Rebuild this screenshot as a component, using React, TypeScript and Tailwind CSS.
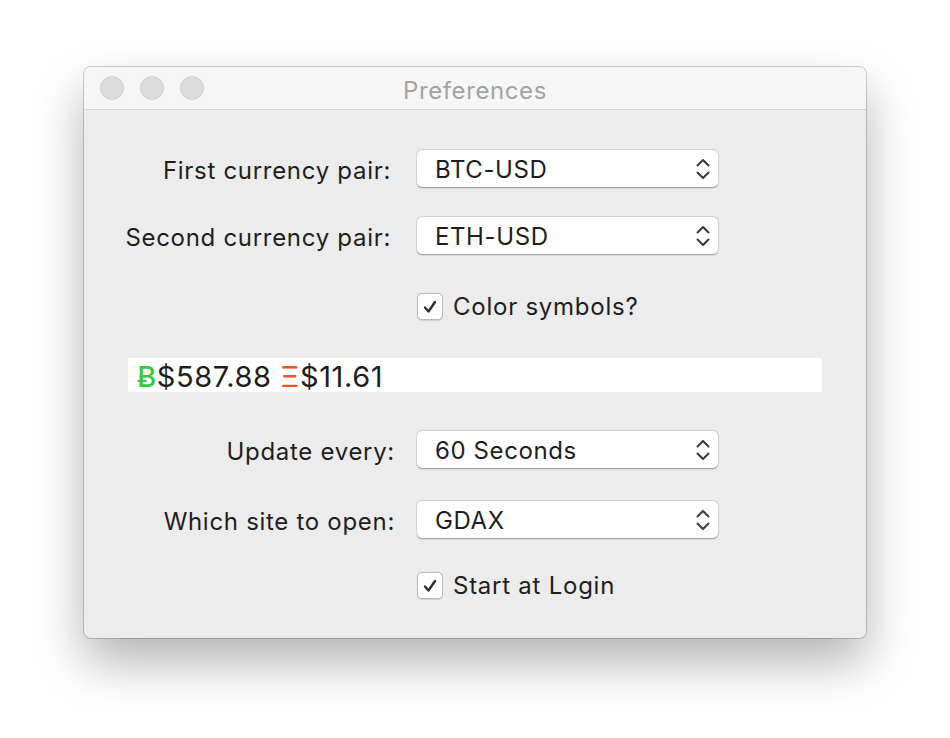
import React from "react";

const font = { fontFamily: "Inter, 'Liberation Sans', sans-serif" };

function Chevrons() {
  return (
    <svg width="16" height="26" viewBox="0 0 16 26" className="shrink-0">
      <path d="M2.5 9.5 L8 4 L13.5 9.5" fill="none" stroke="#3a3a3a" strokeWidth="2" strokeLinecap="round" strokeLinejoin="round" />
      <path d="M2.5 16.5 L8 22 L13.5 16.5" fill="none" stroke="#3a3a3a" strokeWidth="2" strokeLinecap="round" strokeLinejoin="round" />
    </svg>
  );
}

function Popup({ value }: { value: string }) {
  return (
    <div className="flex h-[37px] w-[301px] items-center justify-between rounded-[5px] bg-white pl-[18px] pr-[7px] shadow-[0_0.5px_1.5px_rgba(0,0,0,0.35),0_0_0_0.5px_rgba(0,0,0,0.08)]">
      <span className="pt-[2px] text-[24px] leading-none tracking-[0.6px] text-[#1e1e1e]">{value}</span>
      <Chevrons />
    </div>
  );
}

function Check({ label }: { label: string }) {
  return (
    <div className="flex items-center gap-[10px]">
      <div className="flex h-[27px] w-[26px] items-center justify-center rounded-[5px] border border-[#b9b9b9] bg-white shadow-[0_0.5px_1px_rgba(0,0,0,0.12)]">
        <svg width="16" height="16" viewBox="0 0 16 16">
          <path d="M3 8.5 L6.5 12.5 L13 3" fill="none" stroke="#2e2e2e" strokeWidth="2.4" strokeLinecap="round" strokeLinejoin="round" />
        </svg>
      </div>
      <span className="pt-[1px] text-[24px] leading-none tracking-[0.75px] text-[#1e1e1e]">{label}</span>
    </div>
  );
}

function Row({ label, value, pr }: { label: string; value: string; pr: string }) {
  return (
    <div className="flex items-center">
      <div className={`w-[333px] pt-[5px] text-right text-[24px] leading-none tracking-[0.7px] text-[#1e1e1e] ${pr}`}>{label}</div>
      <Popup value={value} />
    </div>
  );
}

export default function App() {
  return (
    <div className="min-h-[738px] w-[950px] bg-white pl-[84px] pt-[67px]" style={font}>
      <div className="flex h-[571px] w-[782px] flex-col overflow-hidden rounded-[7px] bg-[#ececec] shadow-[0_24px_50px_rgba(0,0,0,0.3),0_0_0_1px_rgba(0,0,0,0.18)]">
        <div className="relative flex h-[43px] shrink-0 items-center border-b border-[#d2d2d2] bg-[#f6f6f6]">
          <div className="flex gap-[16px] pl-[16px]">
            <div className="h-[24px] w-[24px] rounded-full border border-[#d0d0d0] bg-[#dddddd]" />
            <div className="h-[24px] w-[24px] rounded-full border border-[#d0d0d0] bg-[#dddddd]" />
            <div className="h-[24px] w-[24px] rounded-full border border-[#d0d0d0] bg-[#dddddd]" />
          </div>
          <div className="absolute inset-0 flex items-center justify-center pt-[5px] text-[24px] leading-none tracking-[0.6px] text-[#a3a3a3]">Preferences</div>
        </div>
        <div className="flex flex-col">
          <div className="mt-[40px]">
            <Row label="First currency pair:" value="BTC-USD" pr="pr-[26px]" />
          </div>
          <div className="mt-[30px]">
            <Row label="Second currency pair:" value="ETH-USD" pr="pr-[26px]" />
          </div>
          <div className="mt-[39px] pl-[333px]">
            <Check label="Color symbols?" />
          </div>
          <div className="ml-[44px] mt-[38px] flex h-[34px] w-[694px] items-center bg-white pl-[9px] pt-[2px] text-[29px] leading-none tracking-[0.6px] text-[#1e1e1e]">
            <span className="font-medium text-[#3cc83c]">Ƀ</span>
            <span>$587.88&nbsp;</span>
            <span className="text-[#f2512b]">Ξ</span>
            <span>$11.61</span>
          </div>
          <div className="mt-[39px]">
            <Row label="Update every:" value="60 Seconds" pr="pr-[22px]" />
          </div>
          <div className="mt-[33px]">
            <Row label="Which site to open:" value="GDAX" pr="pr-[22px]" />
          </div>
          <div className="mt-[34px] pl-[333px]">
            <Check label="Start at Login" />
          </div>
        </div>
      </div>
    </div>
  );
}
